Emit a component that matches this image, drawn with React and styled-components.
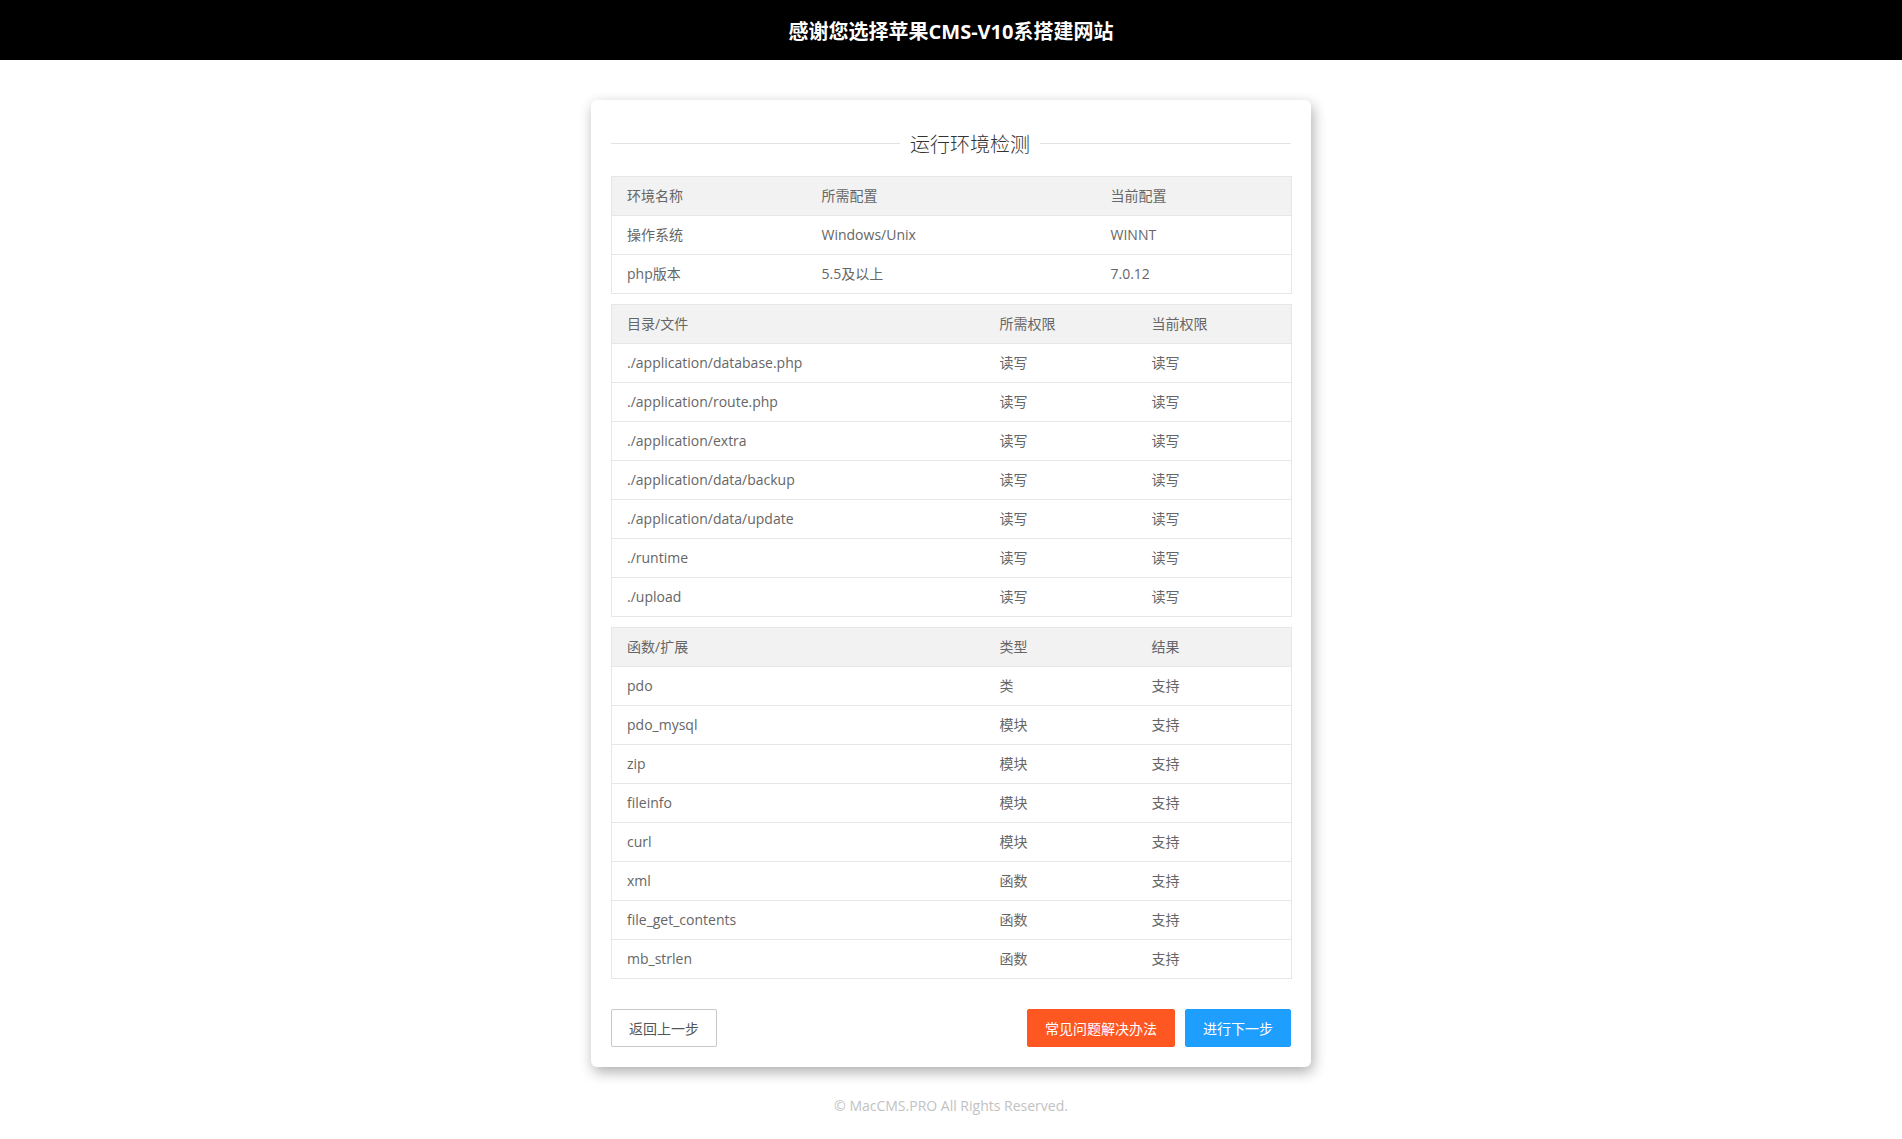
import React from "react";
import styled, { createGlobalStyle } from "styled-components";

const GlobalStyle = createGlobalStyle`
  body {
    margin: 0;
    background: #fff;
    font-family: "Open Sans", "Noto Sans CJK SC", sans-serif;
    color: #666;
  }
`;

const TopBar = styled.header`
  height: 60px;
  background: #000;
  color: #fff;
  display: flex;
  align-items: center;
  justify-content: center;
  font-size: 20px;
  font-weight: 700;
  font-family: "Open Sans", "Noto Sans CJK SC", sans-serif;
`;

const Card = styled.main`
  width: 680px;
  margin: 40px auto 0;
  padding: 20px;
  background: #fff;
  border-radius: 6px;
  box-shadow: 2px 5px 14px rgba(0, 0, 0, 0.32);
`;

const Legend = styled.div`
  height: 46px;
  margin-bottom: 10px;
  display: flex;
  align-items: center;
  gap: 10px;
`;

const Rule = styled.span`
  flex: ${(p) => (p.$basis ? `0 0 ${p.$basis}px` : "1")};
  height: 1px;
  background: #e2e2e2;
`;

const LegendText = styled.span`
  font-size: 20px;
  font-weight: 300;
  color: #333;
`;

const Tables = styled.div`
  display: flex;
  flex-direction: column;
  gap: 10px;
`;

const Table = styled.table`
  width: 100%;
  table-layout: fixed;
  border-collapse: collapse;
  border: 1px solid #e6e6e6;
  font-size: 14px;
  color: #666;
`;

const Cell = styled.td`
  padding: 9px 15px;
  line-height: 20px;
  border-top: 1px solid #e6e6e6;
  text-align: left;
  font-weight: 400;
  white-space: nowrap;
`;

const HeadRow = styled.tr`
  background: #f2f2f2;
`;

const Actions = styled.div`
  margin-top: 30px;
  display: flex;
  justify-content: space-between;
  align-items: center;
`;

const Group = styled.div`
  display: flex;
  gap: 10px;
`;

const Button = styled.button`
  height: 38px;
  padding: 0 17px;
  border-radius: 2px;
  font-size: 14px;
  font-family: "Open Sans", "Noto Sans CJK SC", sans-serif;
  cursor: pointer;
  border: 1px solid ${(p) => (p.$bg ? p.$bg : "#c9c9c9")};
  background: ${(p) => p.$bg || "#fff"};
  color: ${(p) => (p.$bg ? "#fff" : "#555")};
`;

const Footer = styled.footer`
  padding: 29px 0 20px;
  text-align: center;
  line-height: 20px;
  font-size: 14px;
  color: #c2c2c2;
`;

const envRows = [
  ["操作系统", "Windows/Unix", "WINNT"],
  ["php版本", "5.5及以上", "7.0.12"],
];

const dirRows = [
  "./application/database.php",
  "./application/route.php",
  "./application/extra",
  "./application/data/backup",
  "./application/data/update",
  "./runtime",
  "./upload",
].map((d) => [d, "读写", "读写"]);

const funcRows = [
  ["pdo", "类"],
  ["pdo_mysql", "模块"],
  ["zip", "模块"],
  ["fileinfo", "模块"],
  ["curl", "模块"],
  ["xml", "函数"],
  ["file_get_contents", "函数"],
  ["mb_strlen", "函数"],
].map(([n, t]) => [n, t, "支持"]);

const CheckTable = ({ widths, head, rows }) => (
  <Table>
    <colgroup>
      {widths.map((w, i) => (
        <col key={i} style={{ width: w }} />
      ))}
    </colgroup>
    <thead>
      <HeadRow>
        {head.map((h) => (
          <Cell as="th" key={h}>
            {h}
          </Cell>
        ))}
      </HeadRow>
    </thead>
    <tbody>
      {rows.map((r, i) => (
        <tr key={i}>
          {r.map((c, j) => (
            <Cell key={j}>{c}</Cell>
          ))}
        </tr>
      ))}
    </tbody>
  </Table>
);

export default function App() {
  return (
    <>
      <GlobalStyle />
      <TopBar>感谢您选择苹果CMS-V10系搭建网站</TopBar>
      <Card>
        <Legend>
          <Rule $basis={289} />
          <LegendText>运行环境检测</LegendText>
          <Rule />
        </Legend>
        <Tables>
          <CheckTable
            widths={[195, 289, 196]}
            head={["环境名称", "所需配置", "当前配置"]}
            rows={envRows}
          />
          <CheckTable
            widths={[373, 152, 155]}
            head={["目录/文件", "所需权限", "当前权限"]}
            rows={dirRows}
          />
          <CheckTable
            widths={[373, 152, 155]}
            head={["函数/扩展", "类型", "结果"]}
            rows={funcRows}
          />
        </Tables>
        <Actions>
          <Button>返回上一步</Button>
          <Group>
            <Button $bg="#ff5722">常见问题解决办法</Button>
            <Button $bg="#1e9fff">进行下一步</Button>
          </Group>
        </Actions>
      </Card>
      <Footer>© MacCMS.PRO All Rights Reserved.</Footer>
    </>
  );
}
